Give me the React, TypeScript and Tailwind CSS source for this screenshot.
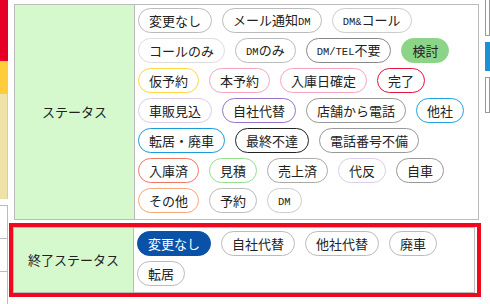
import React from "react";

type Pill = { label: string; border: string; bg?: string; text?: string };

const statusPills: Pill[] = [
  { label: "変更なし", border: "border-[#bbbbbb]" },
  { label: "メール通知DM", border: "border-[#bbbbbb]" },
  { label: "DM&コール", border: "border-[#cccccc]" },
  { label: "コールのみ", border: "border-[#dddddd]" },
  { label: "DMのみ", border: "border-[#bbbbbb]" },
  { label: "DM/TEL不要", border: "border-[#888888]" },
  { label: "検討", border: "border-[#8cd488]", bg: "bg-[#8cd488]" },
  { label: "仮予約", border: "border-[#ffd640]" },
  { label: "本予約", border: "border-[#f7a3c4]" },
  { label: "入庫日確定", border: "border-[#f7a3c4]" },
  { label: "完了", border: "border-[#e3123c]" },
  { label: "車販見込", border: "border-[#dccdeb]" },
  { label: "自社代替", border: "border-[#9a72c9]" },
  { label: "店舗から電話", border: "border-[#999999]" },
  { label: "他社", border: "border-[#1fa3df]" },
  { label: "転居・廃車", border: "border-[#1a9ad9]" },
  { label: "最終不達", border: "border-[#222222]" },
  { label: "電話番号不備", border: "border-[#999999]" },
  { label: "入庫済", border: "border-[#f27566]" },
  { label: "見積", border: "border-[#93e091]" },
  { label: "売上済", border: "border-[#aaaaaa]" },
  { label: "代反", border: "border-[#dccdeb]" },
  { label: "自車", border: "border-[#999999]" },
  { label: "その他", border: "border-[#f8a478]" },
  { label: "予約", border: "border-[#bbbbbb]" },
  { label: "DM", border: "border-[#cccccc]" },
];

const endPills: Pill[] = [
  { label: "変更なし", border: "border-[#0a52a8]", bg: "bg-[#0a52a8]", text: "text-white" },
  { label: "自社代替", border: "border-[#bbbbbb]" },
  { label: "他社代替", border: "border-[#bbbbbb]" },
  { label: "廃車", border: "border-[#bbbbbb]" },
  { label: "転居", border: "border-[#bbbbbb]" },
];

// ascii parts of a label are drawn in a small mono font, like the original
function PillText({ label }: { label: string }) {
  const parts = label.split(/([A-Za-z&\/]+)/).filter(Boolean);
  return (
    <span className="leading-[17px]">
      {parts.map((p, i) =>
        /^[A-Za-z&\/]+$/.test(p) ? (
          <span key={i} className="text-[10.5px] font-['Liberation_Mono',monospace]">{p}</span>
        ) : (
          <span key={i}>{p}</span>
        )
      )}
    </span>
  );
}

function PillList({ pills }: { pills: Pill[] }) {
  return (
    <div className="flex-1 flex flex-wrap content-start pl-[3px] pt-[3px] pb-[1px]">
      {pills.map((p, i) => (
        <span
          key={i}
          className={`h-[25px] mr-[10px] mb-[5px] px-[10px] border rounded-full flex items-center ${p.border} ${p.bg ?? "bg-white"} ${p.text ?? "text-[#222222]"}`}
        >
          <PillText label={p.label} />
        </span>
      ))}
    </div>
  );
}

export default function App() {
  return (
    <div className="w-[490px] h-[304px] overflow-hidden bg-white flex text-[13px] font-['Noto_Sans_CJK_JP',sans-serif] text-[#222222]">
      {/* left side menu edge */}
      <div className="w-[8px] shrink-0 flex flex-col">
        <div className="h-[67px] bg-[#e60028]" />
        <div className="h-[36px] bg-[#ffcd3c]" />
        <div className="h-[115px] bg-[#eee2a8] border-r border-[#cccccc]" />
        <div className="h-[7px]" />
        <div className="h-[36px] border-t border-r border-[#bbbbbb]" />
        <div className="h-[36px] border-t border-r border-[#bbbbbb]" />
        <div className="h-[36px] border-t border-r border-[#bbbbbb]" />
      </div>

      <div className="w-[473px] shrink-0 ml-[1px] flex flex-col">
        <div className="mt-[4px] ml-[5px] w-[465px] border border-[#bbbbbb] flex">
          <div className="w-[120px] shrink-0 bg-[#d6f8cd] border-r border-[#bbbbbb] flex items-center justify-center">
            ステータス
          </div>
          <PillList pills={statusPills} />
        </div>

        <div className="mt-[3px] w-[472px] border-4 border-[#f0081f] pr-[2px]">
          <div className="border border-[#bbbbbb] flex">
            <div className="w-[120px] shrink-0 bg-[#d6f8cd] border-r border-[#bbbbbb] flex items-center justify-center">
              終了ステータス
            </div>
            <PillList pills={endPills} />
          </div>
        </div>
      </div>

      {/* right edge of neighbouring column */}
      <div className="ml-[3px] flex-1 flex flex-col">
        <div className="h-[36px] border border-t-0 border-[#999999]" />
        <div className="h-[29px] mt-[6px] bg-[#1e8fd0]" />
        <div className="h-[36px] mt-[6px] border border-[#999999]" />
      </div>
    </div>
  );
}
